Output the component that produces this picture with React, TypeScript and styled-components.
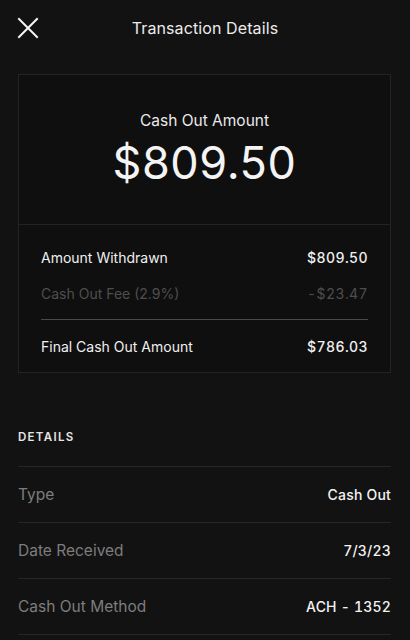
import styled, { createGlobalStyle } from 'styled-components';

const GlobalStyle = createGlobalStyle`
  html, body {
    margin: 0;
    padding: 0;
    background: #121212;
  }
  body {
    font-family: Inter, 'Noto Sans', sans-serif;
    color: #f2f2f2;
    -webkit-font-smoothing: antialiased;
  }
`;

const Screen = styled.div`
  width: 410px;
  min-height: 640px;
  background: #121212;
  overflow: hidden;
`;

const Header = styled.header`
  position: relative;
  height: 56px;
  display: flex;
  align-items: center;
  justify-content: center;
`;

const CloseButton = styled.button`
  position: absolute;
  left: 14px;
  top: 14px;
  width: 28px;
  height: 28px;
  padding: 0;
  border: none;
  background: transparent;
  display: flex;
  align-items: center;
  justify-content: center;
`;

const Title = styled.h1`
  margin: 0;
  font-size: 16px;
  font-weight: 400;
  color: #ececec;
  letter-spacing: 0.1px;
`;

const Card = styled.section`
  margin: 18px 19px 0 18px;
  border: 1px solid #232323;
  background: #0f0f0f;
`;

const Hero = styled.div`
  height: 150px;
  display: flex;
  flex-direction: column;
  align-items: center;
  border-bottom: 1px solid #232323;
  box-sizing: border-box;
  padding-top: 36px;
`;

const HeroLabel = styled.div`
  font-size: 15.5px;
  color: #eaeaea;
  line-height: 20px;
`;

const HeroAmount = styled.div`
  font-size: 45px;
  font-weight: 400;
  color: #f4f4f4;
  line-height: 50px;
  margin-top: 7px;
  letter-spacing: 0.6px;
`;

const Breakdown = styled.div`
  padding: 14px 22px 8px 22px;
  display: flex;
  flex-direction: column;
`;

const BreakdownRow = styled.div<{ $muted?: boolean }>`
  display: flex;
  justify-content: space-between;
  align-items: center;
  height: 36px;
  font-size: 14px;
  color: ${p => (p.$muted ? '#4e4e4e' : '#f0f0f0')};
`;

const Amount = styled.span<{ $muted?: boolean }>`
  font-weight: ${p => (p.$muted ? 400 : 500)};
  font-variant-numeric: tabular-nums;
  letter-spacing: 0.4px;
`;

const Rule = styled.div`
  height: 1px;
  background: #4a4a4a;
  margin: 8px 0;
`;

const Section = styled.section`
  padding: 0 19px 0 18px;
  margin-top: 55px;
`;

const SectionTitle = styled.h2`
  margin: 0;
  height: 39px;
  font-size: 11.5px;
  font-weight: 600;
  letter-spacing: 1.3px;
  color: #e6e6e6;
  border-bottom: 1px solid #262626;
  display: flex;
  align-items: flex-start;
  padding-top: 2px;
  box-sizing: border-box;
`;

const DetailRow = styled.div`
  height: 56px;
  display: flex;
  justify-content: space-between;
  align-items: center;
  border-bottom: 1px solid #262626;
  box-sizing: border-box;
`;

const DetailLabel = styled.span`
  font-size: 15.5px;
  color: #7d7d7d;
`;

const DetailValue = styled.span`
  font-size: 14px;
  font-weight: 500;
  color: #f2f2f2;
  font-variant-numeric: tabular-nums;
  letter-spacing: 0.2px;
`;

const details = [
  { label: 'Type', value: 'Cash Out' },
  { label: 'Date Received', value: '7/3/23' },
  { label: 'Cash Out Method', value: 'ACH - 1352' },
];

export default function App() {
  return (
    <Screen>
      <GlobalStyle />
      <Header>
        <CloseButton aria-label='Close'>
          <svg width='22' height='22' viewBox='0 0 22 22'>
            <path d='M2 2 L20 20 M20 2 L2 20' stroke='#f5f5f5' strokeWidth='2' strokeLinecap='square' />
          </svg>
        </CloseButton>
        <Title>Transaction Details</Title>
      </Header>

      <Card>
        <Hero>
          <HeroLabel>Cash Out Amount</HeroLabel>
          <HeroAmount>$809.50</HeroAmount>
        </Hero>
        <Breakdown>
          <BreakdownRow>
            <span>Amount Withdrawn</span>
            <Amount>$809.50</Amount>
          </BreakdownRow>
          <BreakdownRow $muted>
            <span>Cash Out Fee (2.9%)</span>
            <Amount $muted>-$23.47</Amount>
          </BreakdownRow>
          <Rule />
          <BreakdownRow>
            <span>Final Cash Out Amount</span>
            <Amount>$786.03</Amount>
          </BreakdownRow>
        </Breakdown>
      </Card>

      <Section>
        <SectionTitle>DETAILS</SectionTitle>
        {details.map(d => (
          <DetailRow key={d.label}>
            <DetailLabel>{d.label}</DetailLabel>
            <DetailValue>{d.value}</DetailValue>
          </DetailRow>
        ))}
      </Section>
    </Screen>
  );
}
